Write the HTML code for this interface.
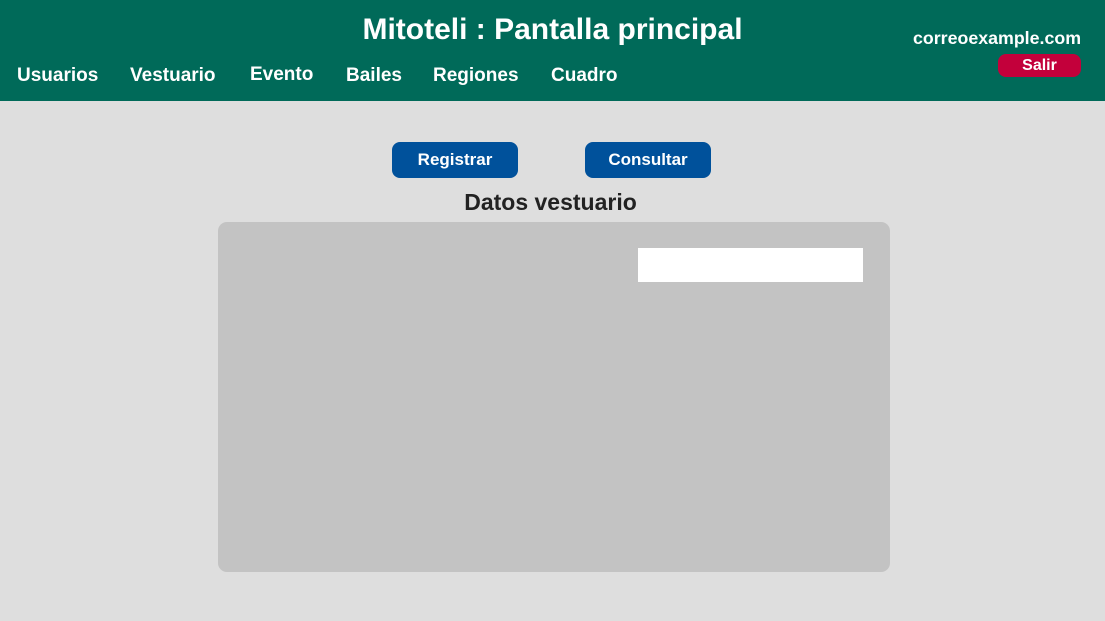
<!DOCTYPE html>
<html><head><style>
body{margin:0;width:1105px;height:621px;background:#dedede;font-family:"Liberation Sans",sans-serif;position:relative;overflow:hidden}
.hdr{position:absolute;left:0;top:0;width:1105px;height:101px;background:#006a59;color:#fff;font-weight:bold}
.t{position:absolute;left:0;width:1105px;text-align:center;top:13px;font-size:30px}
.nav{position:absolute;top:65px;font-size:19px}
.mail{position:absolute;left:913px;top:28px;font-size:17.8px}
.salir{position:absolute;left:998px;top:54px;width:83px;height:23px;background:#c3003b;border-radius:8px;text-align:center;font-size:16px;line-height:23px}
.btn{position:absolute;top:142px;width:126px;height:36px;background:#00519b;border-radius:8px;color:#fff;font-weight:bold;font-size:17px;text-align:center;line-height:36px}
.h2{position:absolute;left:0;width:1101px;text-align:center;top:189px;font-size:23px;font-weight:bold;color:#222}
.panel{position:absolute;left:218px;top:222px;width:672px;height:350px;background:#c3c3c3;border-radius:9px}
.inp{position:absolute;left:638px;top:248px;width:225px;height:34px;background:#fff}
</style></head><body>
<div class="hdr">
<div class="t">Mitoteli : Pantalla principal</div>
<span class="nav" style="left:17px">Usuarios</span>
<span class="nav" style="left:130px">Vestuario</span>
<span class="nav" style="left:250px;top:64px">Evento</span>
<span class="nav" style="left:346px">Bailes</span>
<span class="nav" style="left:433px">Regiones</span>
<span class="nav" style="left:551px">Cuadro</span>
<div class="mail">correoexample.com</div>
<div class="salir">Salir</div>
</div>
<div class="btn" style="left:392px">Registrar</div>
<div class="btn" style="left:585px">Consultar</div>
<div class="h2">Datos vestuario</div>
<div class="panel"></div>
<div class="inp"></div>
</body></html>
